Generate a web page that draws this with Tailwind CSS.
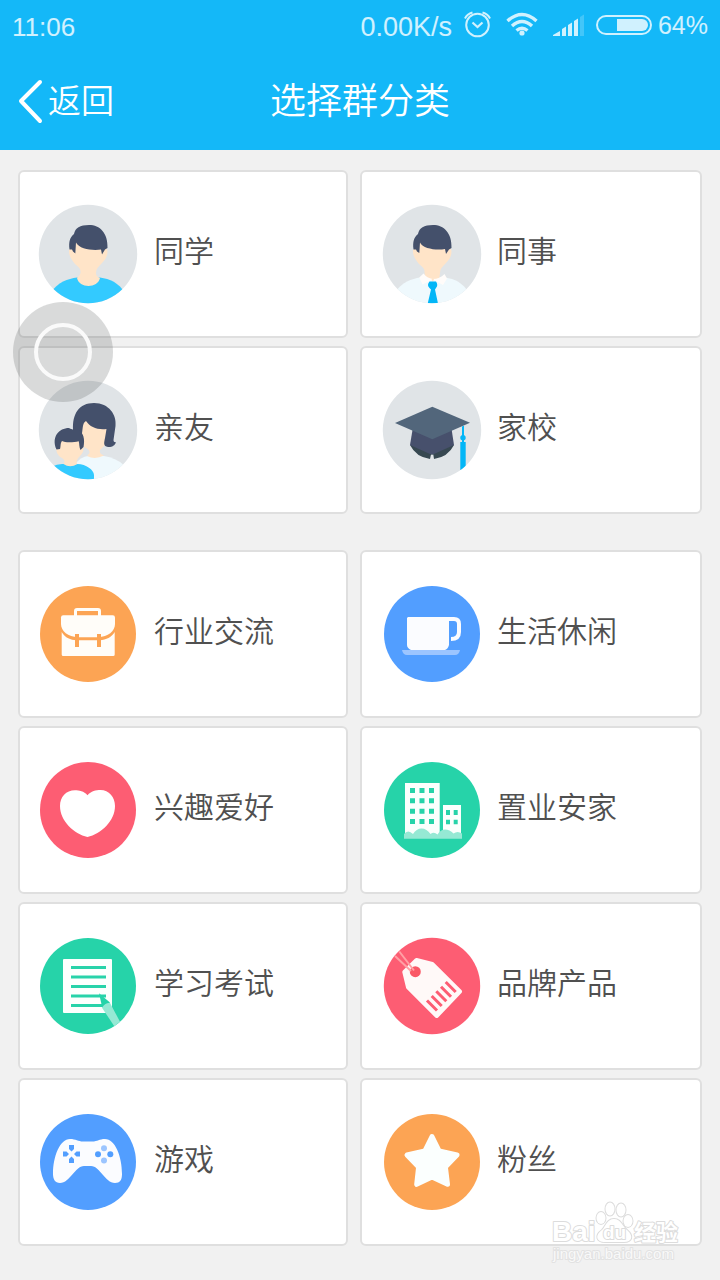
<!DOCTYPE html>
<html lang="zh-CN">
<head>
<meta charset="utf-8">
<meta name="viewport" content="width=device-width, initial-scale=1">
<title>选择群分类</title>
<script src="https://cdn.jsdelivr.net/npm/@tailwindcss/browser@4"></script>
</head>
<body class="relative min-h-screen bg-[#f1f1f1] font-['Noto_Sans_CJK_SC',sans-serif] font-[350] text-[#505050]">

<header class="bg-[#14b8f8] text-white">
  <div class="flex h-[50px] items-center justify-between px-3 pb-[2px] font-['Liberation_Sans',sans-serif] text-[27px] leading-none font-normal text-white/80">
    <time class="pt-[6px] text-[26px]">11:06</time>
    <div class="flex items-center">
      <span class="pt-[6px]">0.00K/s</span>
      <svg class="ml-[10px] h-8 w-8" viewBox="0 0 32 32" fill="none" stroke="currentColor" stroke-width="2" aria-label="闹钟">
        <circle cx="15.500" cy="17" r="11.300"/>
        <path d="M10.500 14.500l5 4.500 5-4.500" stroke-width="2.200"/>
        <path d="M3 10.500Q5 6 10.500 4.500M28 10.500Q26 6 20.500 4.500"/>
      </svg>
      <svg class="ml-3 h-8 w-8" viewBox="0 0 32 32" fill="none" stroke="currentColor" stroke-width="3.400" aria-label="无线网络">
        <path d="M1.500 13Q16 0 30.500 13M6 18Q16 9 26 18M10.500 22.500Q16 18 21.500 22.500"/>
        <circle cx="16" cy="25" r="2.600" fill="currentColor" stroke="none"/>
      </svg>
      <svg class="ml-[14px] h-8 w-8" viewBox="0 0 32 32" fill="currentColor" aria-label="信号">
        <path d="M1 28v-1l7-4v5zM10 28v-7l4-2.500V28zM16 28V17l4-2.500V28zM22 28V13l4-2.500V28z"/>
        <path d="M28 28V9l4-2.500V28z" opacity=".25"/>
      </svg>
      <svg class="ml-3 h-8 w-14" viewBox="0 0 56 32" aria-label="电池">
        <rect x="1" y="8" width="54" height="18" rx="9" fill="none" stroke="currentColor" stroke-width="2"/>
        <path d="M21 11h25a6 6 0 0 1 0 12H21z" fill="currentColor"/>
      </svg>
      <span class="ml-[6px] pt-[2px] text-[25px]">64%</span>
    </div>
  </div>
  <div class="grid h-[100px] grid-cols-[1fr_auto_1fr] items-center px-4">
    <button type="button" class="flex items-center justify-self-start text-[33px] leading-[50px]">
      <svg class="h-12 w-8" viewBox="0 0 32 48" fill="none" stroke="currentColor" stroke-width="4" stroke-linecap="round" stroke-linejoin="round" aria-hidden="true"><path d="M24 6L5 25l19 20"/></svg>
      <span class="pb-[2px]">返回</span>
    </button>
    <h1 class="pb-1 text-[36px] leading-[50px]">选择群分类</h1>
  </div>
</header>

<main class="flex flex-col gap-9 px-[18px] pt-5 pb-8 text-[30px] leading-[44px]">
  <section class="grid grid-cols-[330fr_342fr] gap-x-3 gap-y-2">
    <button type="button" class="flex h-[168px] items-center gap-4 rounded-md border-2 border-[#dfdfdf] bg-white pl-[18px] text-left">
      <svg class="size-[100px] shrink-0" viewBox="0 0 100 100" aria-hidden="true">
        <defs><clipPath id="disc"><circle cx="50" cy="50" r="49.200"/></clipPath></defs>
        <g clip-path="url(#disc)">
          <path fill="#e0e4e7" d="M0 0h100v100H0z"/>
          <path fill="#33caff" d="M12 90C20 77 30 75 39 73.500H62C72 75 80 78 88 90V100H12z"/>
          <path fill="#ffe4c8" d="M37 38L31 46C30.500 52 34 56 37 60 41 63 43 65 42.500 69 42 72 40 72.500 39 74 41 84.500 60 84.500 62 74 59 73 58 71 58 69 58 65 60 63 64 59 68 55 70 51 69.300 46L63 38z"/>
          <path fill="#44506b" d="M31.500 45.500C30.500 38 32 33 36 30 37 24 42 21 51 21 62 21 70 29 69.500 44L67 45.500 64 50.500 63 45.500C55 47 41 45 38 38.500L37.300 49.500 35 47.500 34 45.500z"/>
        </g>
      </svg>
      <span class="pb-[10px]">同学</span>
    </button>
    <button type="button" class="flex h-[168px] items-center gap-[15px] rounded-md border-2 border-[#dfdfdf] bg-white pl-5 text-left">
      <svg class="size-[100px] shrink-0" viewBox="0 0 100 100" aria-hidden="true">
        <g clip-path="url(#disc)">
          <path fill="#e0e4e7" d="M0 0h100v100H0z"/>
          <path fill="#eff9fd" d="M12 90C20 77 30 75 38 73.500H63C73 75 80 78 88 90V100H12z"/>
          <path fill="#ffe4c8" d="M37 38L31 46C30.500 52 34 56 37 60 41 63 43 65 42.500 69L44 76H57L58 69C58 65 60 63 64 59 68 55 70 51 69.300 46L63 38z"/>
          <path fill="#fffcfa" d="M41.500 69.500L37.300 73.500 40.500 80.500 50.700 75.500 61 81 65 74.500 62.500 70Q58 75 50.700 75 45 74 41.500 69.500z"/>
          <path fill="#ffe4c8" d="M49.500 75h2.500l-1.200 3z"/>
          <path fill="#03b6f7" d="M47.500 77.500h6.500q2.500 3.500 0 6.500L53 85.500 56 99.500H45.700L49 85.500 47.500 84q-3-3 0-6.500z"/>
          <path fill="#44506b" d="M31.500 45.500C30.500 38 32 33 36 30 37 24 42 21 51 21 62 21 70 29 69.500 44L67 45.500 64 50 63 45C55 46.500 41 45 38 38.500L37.300 49 35 47.500 34 45.500z"/>
        </g>
      </svg>
      <span class="pb-[10px]">同事</span>
    </button>
    <button type="button" class="flex h-[168px] items-center gap-4 rounded-md border-2 border-[#dfdfdf] bg-white pl-[18px] text-left">
      <svg class="size-[100px] shrink-0" viewBox="0 0 100 100" aria-hidden="true">
        <g clip-path="url(#disc)">
          <path fill="#e0e4e7" d="M0 0h100v100H0z"/>
          <path fill="#eff9fd" d="M38 83Q43 77 50 76H66Q78 78 85 84.500L90 100H50z"/>
          <path fill="#ffe4c8" d="M45 40L42 55 46 67Q52 69 51.500 73L49 76Q57 80 66 75.500 61 74 62 70L67 65 69 48z"/>
          <path fill="#44506b" d="M43.500 56L35 50C34 34 41 23 56 23 71 23 79 35 77.500 46L75.500 60C75.500 62 77 62.500 78 62 77 66 73 67.500 70 67 65 66 66 63 67 58L68.500 49C59 50 52 47 48 41 44 43 45 50 43.500 56z"/>
          <path fill="#ffe4c8" d="M21 58L18 67C18 72 20 76 24 78 27 80 27 82 25.500 84 28 88 37 88 39 84 38 81 39 79 42 76 45 73 46 70 45.500 67L41 58z"/>
          <path fill="#44506b" d="M18.500 69.500C13 57 21 48 31 48 34 49.500 35 50 39 49 46 52 47 60 45.500 67L42.500 70C41 67 41.500 64 40.700 61.300 36 62.500 27 63 24 61 22 64 23 66 22 69z"/>
          <path fill="#33caff" d="M13 87Q20 83.500 25.500 84 32 88.500 39.500 84C48 84 56 90 56 95V100H13z"/>
        </g>
      </svg>
      <span class="pb-[10px]">亲友</span>
    </button>
    <button type="button" class="flex h-[168px] items-center gap-[15px] rounded-md border-2 border-[#dfdfdf] bg-white pl-5 text-left">
      <svg class="size-[100px] shrink-0" viewBox="0 0 100 100" aria-hidden="true">
        <g clip-path="url(#disc)">
          <path fill="#e0e4e7" d="M0 0h100v100H0z"/>
          <path fill="#374851" d="M28 65Q34 77 48 79L49 74.500H51.300L52 79Q66 77 72 65L50 58z"/>
          <path fill="#47506c" d="M30.500 50L28 65 48 74 50 74.500 52 74 72 65 69.700 50z"/>
          <path fill="#52667b" d="M50.300 26.700L88 42.700 50.300 59.300 13 43z"/>
          <path fill="#03b6f7" d="M80 46.500l2-.8V62h1.700V90h-5.400V62H80z"/>
          <circle cx="81" cy="57.700" r="2.700" fill="#03b6f7"/>
        </g>
      </svg>
      <span class="pb-[10px]">家校</span>
    </button>
  </section>

  <section class="grid grid-cols-[330fr_342fr] gap-x-3 gap-y-2">
    <button type="button" class="flex h-[168px] items-center gap-4 rounded-md border-2 border-[#dfdfdf] bg-white pl-[18px] text-left">
      <svg class="size-[100px] shrink-0" viewBox="0 0 100 100" aria-hidden="true">
        <circle cx="50" cy="50" r="48" fill="#fca454"/>
        <g fill="#fffdf9">
          <path d="M36 32v-5q0-3 3-3h21q3 0 3 3v5h-3v-5H39v5z"/>
          <path d="M23 33.500q0-2.200 2.200-2.200h49.600q2.200 0 2.200 2.200V40C77 47 70 53 60 53.200H40C30 53 23 47 23 40z"/>
          <path d="M23.700 48C27 54 33 56 38 56.200H62C68 56 74 53 76.700 48V70.500q0 1.500-1.500 1.500H25.200q-1.500 0-1.500-1.500z"/>
        </g>
        <path fill="#fca454" d="M37 50h4v13h-4zM59 50h4v13h-4z"/>
      </svg>
      <span class="pb-[10px]">行业交流</span>
    </button>
    <button type="button" class="flex h-[168px] items-center gap-[15px] rounded-md border-2 border-[#dfdfdf] bg-white pl-5 text-left">
      <svg class="size-[100px] shrink-0" viewBox="0 0 100 100" aria-hidden="true">
        <circle cx="50" cy="50" r="48" fill="#529eff"/>
        <path fill="#fbfcff" d="M26 33H67V61q-1 4-4 5H29q-4-2-4-5V34z"/>
        <path fill="none" stroke="#fbfcff" stroke-width="4" d="M66 35h6q5 0 5 5v8q0 7-8 7"/>
        <path fill="#9cc5ff" d="M20 66h58q-1 5-5 5H25q-4 0-5-5z"/>
      </svg>
      <span class="pb-[10px]">生活休闲</span>
    </button>
    <button type="button" class="flex h-[168px] items-center gap-4 rounded-md border-2 border-[#dfdfdf] bg-white pl-[18px] text-left">
      <svg class="size-[100px] shrink-0" viewBox="0 0 100 100" aria-hidden="true">
        <circle cx="50" cy="50" r="48" fill="#fd5d73"/>
        <path fill="#fff" d="M49.500 35.300C46 31 41 30.300 37 30.300 28 30.300 22 37 22 46 22 61 36 74 49.500 77 63 74 77 61 77 46 77 37 71 30 62.500 30 58 30 53 31 49.500 35.300z"/>
      </svg>
      <span class="pb-[10px]">兴趣爱好</span>
    </button>
    <button type="button" class="flex h-[168px] items-center gap-[15px] rounded-md border-2 border-[#dfdfdf] bg-white pl-5 text-left">
      <svg class="size-[100px] shrink-0" viewBox="0 0 100 100" aria-hidden="true">
        <circle cx="50" cy="50" r="48" fill="#26d3a9"/>
        <path fill="#fbfffd" d="M23 23h34.700v55H23zM61 45h18v33H61z"/>
        <path fill="#26d3a9" d="M28 28h5v5h-5zM37.500 28h5v5h-5zM47 28h5v5h-5zM28 38.300h5v5h-5zM37.500 38.300h5v5h-5zM47 38.300h5v5h-5zM28 48.700h5v5h-5zM37.500 48.700h5v5h-5zM47 48.700h5v5h-5zM28 59h5v5h-5zM37.500 59h5v5h-5zM47 59h5v5h-5zM64 50h4v5h-4zM71.700 50h4v5h-4zM64 59.700h4v4.500h-4zM71.700 59.700h4v4.500h-4z"/>
        <path fill="#95e9d4" d="M22 78.700V74q4-5 9 0c4-7.500 13-7.500 17.500 0q3.500-2.500 7 .5c4-7 11-6 16-1q4-3 8.500 0v5.200z"/>
      </svg>
      <span class="pb-[10px]">置业安家</span>
    </button>
    <button type="button" class="flex h-[168px] items-center gap-4 rounded-md border-2 border-[#dfdfdf] bg-white pl-[18px] text-left">
      <svg class="size-[100px] shrink-0" viewBox="0 0 100 100" aria-hidden="true">
        <circle cx="50" cy="50" r="48" fill="#26d3a9"/>
        <rect x="25" y="23" width="49" height="54" rx="1" fill="#fbfffd"/>
        <path fill="#26d3a9" d="M33 30h35v3H33zM33 39.500h35v3H33zM33 49h35v3H33zM33 58.500h35v3H33zM33 68h35v3H33z"/>
        <path fill="#26d3a9" d="M61 57.300L72 66.500 64.300 71.700z"/>
        <path fill="#95e9d4" d="M64 71.700Q67 66.500 72 67L82 85.700 76.300 90.300z"/>
      </svg>
      <span class="pb-[10px]">学习考试</span>
    </button>
    <button type="button" class="flex h-[168px] items-center gap-[15px] rounded-md border-2 border-[#dfdfdf] bg-white pl-5 text-left">
      <svg class="size-[100px] shrink-0" viewBox="0 0 100 100" aria-hidden="true">
        <circle cx="50" cy="50" r="48.200" fill="#fd5d73"/>
        <path fill="#fff9f8" stroke="#fff9f8" stroke-width="4" stroke-linejoin="round" d="M34.500 24L50.300 28 78 55.500 54.700 80 26 51.300 22.300 36z"/>
        <circle cx="33.300" cy="35.700" r="5.500" fill="#fa5866"/>
        <path fill="none" stroke="#ffa0a5" stroke-width="2" d="M13 20L29 35M17.300 15.500L32 34.500"/>
        <path fill="none" stroke="#fd5d73" stroke-width="3" d="M45 64.500l10 10M49.700 60l10 10M54.300 55.300l10 10M59 50.700l10 10M63.700 46l10 10"/>
      </svg>
      <span class="pb-[10px]">品牌产品</span>
    </button>
    <button type="button" class="flex h-[168px] items-center gap-4 rounded-md border-2 border-[#dfdfdf] bg-white pl-[18px] text-left">
      <svg class="size-[100px] shrink-0" viewBox="0 0 100 100" aria-hidden="true">
        <circle cx="50" cy="50" r="48" fill="#529eff"/>
        <path fill="#fbfcff" d="M32 27C38 27 40 29.500 45 29.500H54C60 29.500 61 27 67 27 77 27 84 44 84 62 84 68 82 71 77 71 67 71 62 54 53 54H46C37 54 32 71 22 71 17 71 15 67 15 62 15 44 22 27 32 27z"/>
        <path fill="#529eff" d="M31 33h5v4l-2.500 2.500L31 37zM31 51h5v-4l-2.500-2.500L31 47zM25 39.500v5h3.500L31 42l-2.500-2.500zM42 39.500v5h-3.500L36 42l2.500-2.500z"/>
        <g fill="#529eff"><circle cx="60" cy="42.300" r="3"/><circle cx="72.300" cy="42.300" r="3"/></g>
        <g fill="#9cc5ff"><circle cx="66" cy="36.300" r="3"/><circle cx="66" cy="48.500" r="3"/></g>
      </svg>
      <span class="pb-[10px]">游戏</span>
    </button>
    <button type="button" class="flex h-[168px] items-center gap-[15px] rounded-md border-2 border-[#dfdfdf] bg-white pl-5 text-left">
      <svg class="size-[100px] shrink-0" viewBox="0 0 100 100" aria-hidden="true">
        <circle cx="50" cy="50" r="48" fill="#fca454"/>
        <path fill="#fbfffe" stroke="#fbfffe" stroke-width="5" stroke-linejoin="round" d="M50 24.500L57.200 39 75 43 63.400 55 65.500 72.300 50 65 34.700 72.300 36.600 55 25 43 42.800 39z"/>
      </svg>
      <span class="pb-[10px]">粉丝</span>
    </button>
  </section>
</main>

<!-- Floating assistive control -->
<button type="button" aria-label="悬浮球" class="absolute top-[302px] left-[13px] flex size-[100px] items-center justify-center rounded-full bg-[#404448]/20">
  <span class="size-[58px] rounded-full border-4 border-[#fafafa]"></span>
</button>

<!-- Watermark -->
<svg class="pointer-events-none absolute right-[36px] bottom-[12px] h-[70px] w-[136px]" viewBox="0 0 136 70" fill="#fff" stroke="#dcdcdc" stroke-width="2" paint-order="stroke" stroke-linejoin="round">
  <g>
    <path d="M66 21C59 21 58 28 54 32 46 38 49 44 57 44H76C84 44 86 38 79 32 74 28 73 21 66 21z"/>
    <ellipse cx="53" cy="20" rx="4.500" ry="6"/>
    <ellipse cx="62" cy="11" rx="4.500" ry="6.500"/>
    <ellipse cx="73" cy="12" rx="4.500" ry="6.500"/>
    <ellipse cx="80" cy="23" rx="4.500" ry="6"/>
  </g>
  <text x="4" y="43" font-family="Liberation Sans, sans-serif" font-size="28" font-weight="700">Bai</text>
  <text x="55" y="41" font-family="Liberation Sans, sans-serif" font-size="19" font-weight="700">du</text>
  <text x="86" y="42" font-family="Noto Sans CJK SC, sans-serif" font-size="22" font-weight="700">经验</text>
  <text x="5" y="61" font-family="Liberation Sans, sans-serif" font-size="15" font-weight="400" fill="#f9f9f9" stroke="#e2e2e2">jingyan.baidu.com</text>
</svg>
</body>
</html>
